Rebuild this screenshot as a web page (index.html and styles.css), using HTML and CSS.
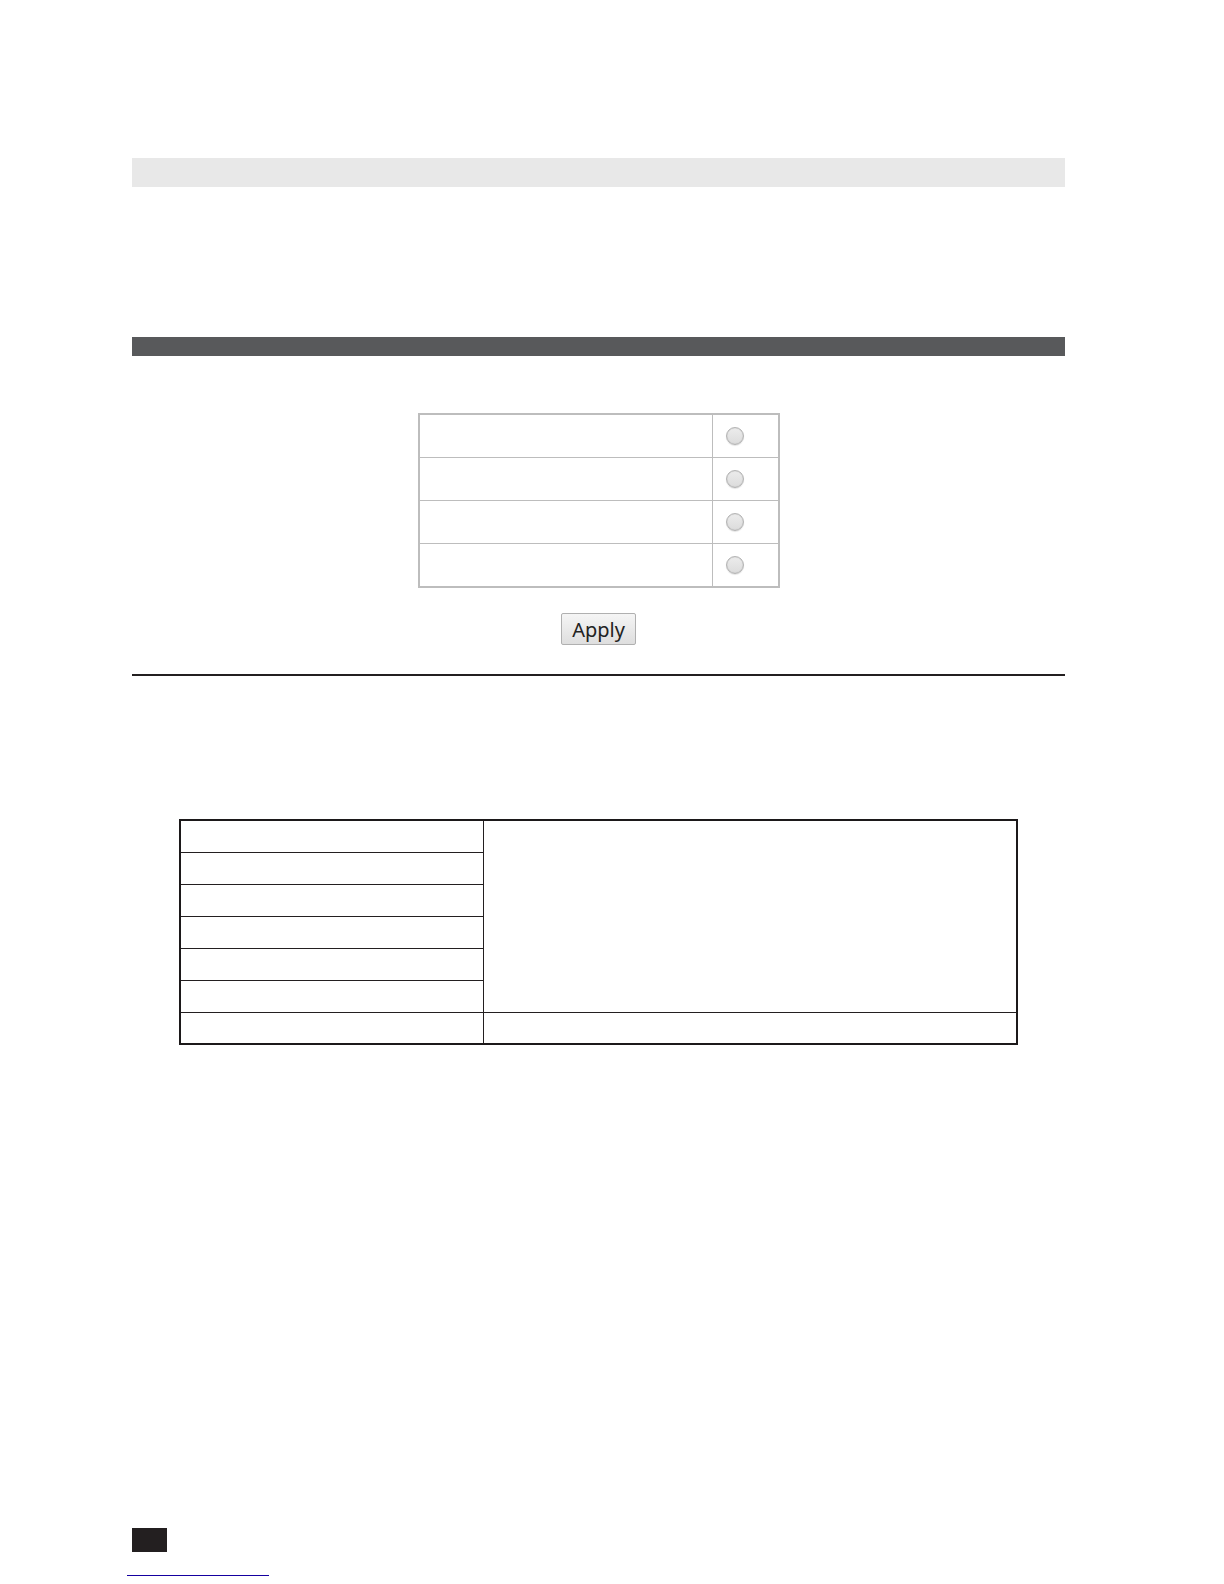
FILE: index.html
```html
<!DOCTYPE html>
<html lang="en">
<head>
  <meta charset="UTF-8">
  <title>Settings</title>
  <link rel="stylesheet" href="styles.css">
</head>
<body>

  <main class="content">
    <div class="title-bar"></div>

    <form class="panel">
      <div class="panel-header"></div>

      <table class="options">
        <tr>
          <td class="option-name"></td>
          <td class="option-pick"><input type="radio" name="option" value="1" aria-label="Option 1"></td>
        </tr>
        <tr>
          <td class="option-name"></td>
          <td class="option-pick"><input type="radio" name="option" value="2" aria-label="Option 2"></td>
        </tr>
        <tr>
          <td class="option-name"></td>
          <td class="option-pick"><input type="radio" name="option" value="3" aria-label="Option 3"></td>
        </tr>
        <tr>
          <td class="option-name"></td>
          <td class="option-pick"><input type="radio" name="option" value="4" aria-label="Option 4"></td>
        </tr>
      </table>

      <button type="button" class="apply">Apply</button>
    </form>

    <table class="details">
      <tr>
        <td class="detail-name"></td>
        <td class="detail-text" rowspan="6"></td>
      </tr>
      <tr><td class="detail-name"></td></tr>
      <tr><td class="detail-name"></td></tr>
      <tr><td class="detail-name"></td></tr>
      <tr><td class="detail-name"></td></tr>
      <tr><td class="detail-name"></td></tr>
      <tr>
        <td class="detail-name"></td>
        <td class="detail-text"></td>
      </tr>
    </table>
  </main>

  <footer class="footer">
    <div class="page-number"></div>
    <a class="footer-link" href="#" aria-label="Back to top"></a>
  </footer>

</body>
</html>
```
FILE: styles.css
```css
* {
  box-sizing: border-box;
}

body {
  display: flex;
  flex-direction: column;
  min-height: 100vh;
  margin: 0;
  background: #fff;
  color: #231f20;
  font-family: "Noto Sans", sans-serif;
}

.content {
  padding: 158px 159px 0 132px;
}

.title-bar {
  height: 29px;
  background: #e8e8e8;
}

.panel {
  display: flex;
  flex-direction: column;
  align-items: center;
  margin-top: 150px;
  padding-bottom: 29px;
  border-bottom: 2px solid #231f20;
}

.panel-header {
  width: 100%;
  height: 19px;
  background: #58595b;
}

table {
  border-spacing: 0;
  table-layout: fixed;
}

td {
  padding: 0;
  border: 0 solid;
  border-bottom-width: 1px;
}

tr:last-child td {
  border-bottom-width: 0;
}

.option-name,
.detail-name {
  border-right-width: 1px;
}

/* radio options */
.options {
  width: 362px;
  margin-top: 57px;
  border: 2px solid #bdbdbd;
}

.options td {
  height: 43px;
  border-color: #bdbdbd;
}

.options tr:last-child td {
  height: 42px;
}

.option-name {
  width: 293px;
}

.options .option-pick {
  padding-left: 13px;
}

.option-pick input {
  display: block;
  appearance: none;
  width: 18px;
  height: 18px;
  margin: 0;
  border: 1px solid #b4b4b4;
  border-radius: 50%;
  background: linear-gradient(#ececec, #dcdcdc);
  box-shadow: inset 0 0 1px #aaa, 0 1px 1px #e4e4e4;
}

.option-pick input:checked {
  background: radial-gradient(#444 35%, #e0e0e0 40%);
}

.apply {
  width: 75px;
  height: 32px;
  margin-top: 25px;
  padding: 1px 0 0;
  border: 1px solid #b0b0b0;
  border-radius: 2px;
  background: linear-gradient(#f5f5f5, #dedede);
  color: #222;
  font-family: inherit;
  font-size: 20px;
  line-height: 29px;
}

/* details table */
.details {
  width: calc(100% - 94px);
  margin: 143px auto 0;
  border: 2px solid #1c191a;
}

.details td {
  height: 32px;
  border-color: #231f20;
}

.details tr:last-child td {
  height: 30px;
}

.detail-name {
  width: 303px;
}

/* footer */
.footer {
  margin-top: auto;
  padding: 0 127px 8px;
}

.page-number {
  width: 35px;
  height: 24px;
  margin-left: 5px;
  background: #231f20;
}

.footer-link {
  display: block;
  width: 142px;
  height: 24px;
  border-bottom: 1px solid #1500a0;
}
```
